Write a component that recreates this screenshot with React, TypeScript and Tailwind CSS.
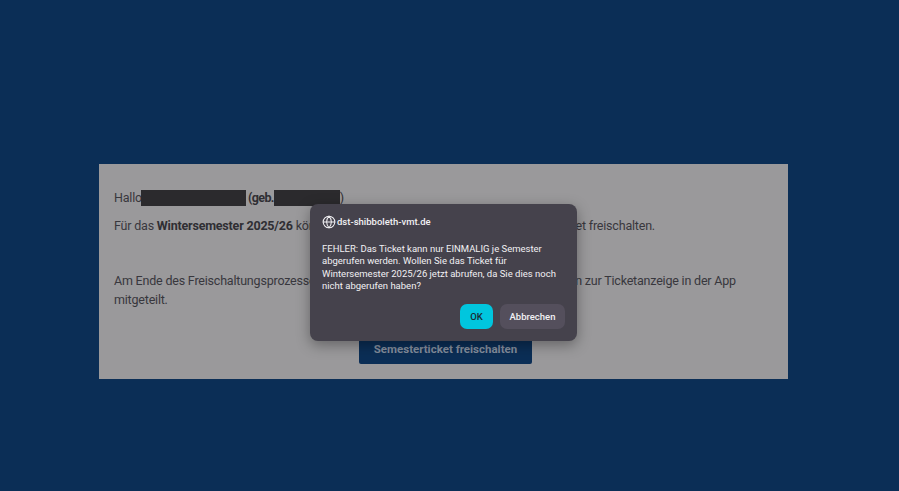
import { Globe } from 'lucide-react';

export default function App() {
  return (
    <div className="relative h-[491px] w-[899px] overflow-hidden bg-[#0b2e56] pl-[99px] pt-[164px] font-['Roboto',sans-serif]">
      <main className="flex h-[215px] w-[689px] flex-col bg-[#9a999b] px-[15px] pt-[25px] text-[12.5px] tracking-[-0.2px] text-[#38373d]">
        <p className="flex h-[18px] items-center leading-[18px]">
          Hallo
          <span className="-ml-px inline-block h-[16px] w-[105px] bg-[#2b2a2d]" />
          <strong className="ml-[2px] font-bold tracking-[-0.6px] text-[#2f2e33]">(geb.</strong>
          <span className="inline-block h-[16px] w-[66px] bg-[#2b2a2d]" />
          <span className="text-[#2f2e33]">)</span>
        </p>
        <p className="mt-[10px] leading-[18px]">
          Für das <strong className="font-bold text-[#2f2e33]">Wintersemester 2025/26</strong> können Sie nun hier an dieser Stelle Ihr Semesterticket freischalten.
        </p>
        <p className="mt-[36px] leading-[19px]">
          Am Ende des Freischaltungsprozesses wird Ihnen ein Link mit den neuen Informationen zur Ticketanzeige in der App mitgeteilt.
        </p>
        <button className="ml-[245px] mt-[27px] h-[28px] w-[173px] shrink-0 whitespace-nowrap rounded-[2px] bg-[#0b2e56] text-[11.5px] font-bold tracking-normal text-[#838d9c]">
          Semesterticket freischalten
        </button>
      </main>

      <div
        role="dialog"
        className="absolute left-[310px] top-[204px] flex h-[137px] w-[267px] flex-col rounded-[8px] bg-[#45424c] px-[12px] pt-[11px] font-['Roboto',sans-serif] text-[#f1f0f3] shadow-[0_4px_14px_rgba(0,0,0,0.35)]"
      >
        <div className="flex items-center gap-px text-[9.5px] font-medium leading-[14px]">
          <Globe className="h-[14px] w-[14px]" strokeWidth={1.75} aria-hidden />
          <span>dst-shibboleth-vmt.de</span>
        </div>
        <p className="mt-[14px] text-[9.5px] leading-[12.4px]">
          FEHLER: Das Ticket kann nur EINMALIG je Semester abgerufen werden. Wollen Sie das Ticket für Wintersemester 2025/26 jetzt abrufen, da Sie dies noch nicht abgerufen haben?
        </p>
        <div className="mt-auto mb-[12px] flex justify-end gap-[7px]">
          <button className="h-[25px] w-[33px] rounded-[7px] bg-[#00c6de] pt-px text-[9.5px] font-medium text-[#1c2a33]">OK</button>
          <button className="h-[25px] w-[65px] rounded-[7px] bg-[#544f5c] pt-px text-[9.5px] font-medium text-[#f1f0f3]">Abbrechen</button>
        </div>
      </div>
    </div>
  );
}
